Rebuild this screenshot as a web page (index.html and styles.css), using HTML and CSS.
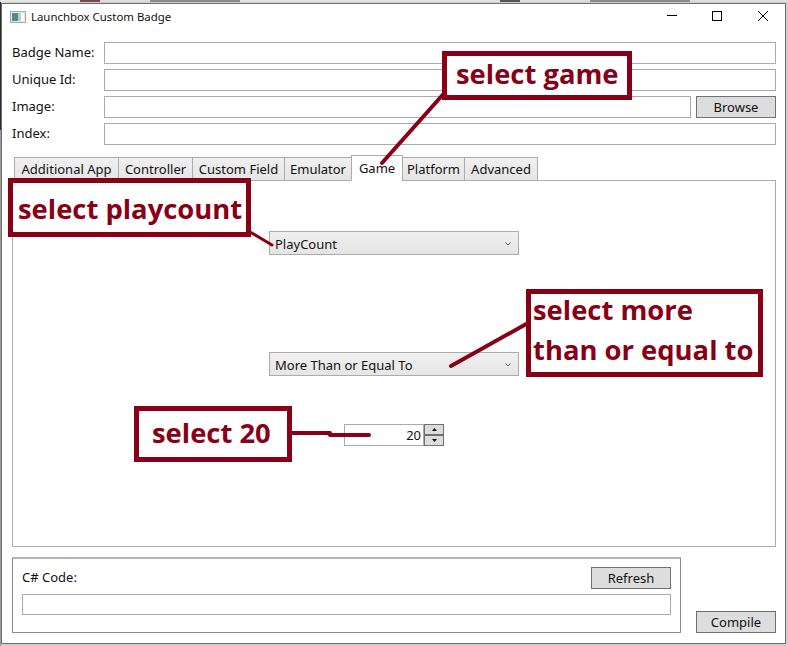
FILE: index.html
```html
<!DOCTYPE html>
<html lang="en">
<head>
    <meta charset="UTF-8">
    <meta name="viewport" content="width=device-width, initial-scale=1.0">
    <title>Launchbox Custom Badge</title>
    <link rel="stylesheet" href="styles.css">
</head>
<body>
    <div class="window">
        <div class="titlebar">
            <svg class="app-icon" width="16" height="12" viewBox="0 0 16 12">
                <rect x="0.5" y="0.5" width="15" height="11" fill="#e8e8e8" stroke="#a9a9a9"/>
                <rect x="2" y="2" width="6" height="8" fill="#4f8f8a"/>
                <rect x="8" y="2" width="3" height="8" fill="#b7cfc9"/>
                <rect x="11" y="2" width="3" height="8" fill="#fff"/>
            </svg>
            <span class="title">Launchbox Custom Badge</span>
            <div class="caption-buttons">
                <svg width="10" height="10" viewBox="0 0 10 10"><path d="M0 4.5H10" stroke="#000" fill="none"/></svg>
                <svg width="10" height="10" viewBox="0 0 10 10"><rect x="0.5" y="0.5" width="9" height="9" stroke="#000" fill="none"/></svg>
                <svg class="close" width="10" height="10" viewBox="0 0 10 10"><path d="M0 0L10 10M10 0L0 10" stroke="#000" fill="none"/></svg>
            </div>
        </div>

        <div class="form">
            <label class="form-label">Badge Name:</label>
            <div class="field"></div>
            <label class="form-label">Unique Id:</label>
            <div class="field"></div>
            <label class="form-label">Image:</label>
            <div class="field-row">
                <div class="field"></div>
                <button class="btn">Browse</button>
            </div>
            <label class="form-label">Index:</label>
            <div class="field"></div>
        </div>

        <div class="tabs">
            <div class="tab w-additional">Additional App</div>
            <div class="tab w-controller">Controller</div>
            <div class="tab w-custom">Custom Field</div>
            <div class="tab w-emulator">Emulator</div>
            <div class="tab tab-active">Game</div>
            <div class="tab w-platform">Platform</div>
            <div class="tab w-advanced">Advanced</div>
        </div>
        <div class="tab-panel">
            <div class="combo">
                <span>PlayCount</span>
                <svg width="6" height="4" viewBox="0 0 6 4"><path d="M0.5 0.5L3 3L5.5 0.5" stroke="#606060" fill="none"/></svg>
            </div>
            <div class="combo combo-second">
                <span>More Than or Equal To</span>
                <svg width="6" height="4" viewBox="0 0 6 4"><path d="M0.5 0.5L3 3L5.5 0.5" stroke="#606060" fill="none"/></svg>
            </div>
            <div class="numeric">
                <div class="numeric-value">20</div>
                <div class="spinner">
                    <div class="spin"><svg width="5" height="3" viewBox="0 0 5 3"><path d="M2.5 0L5 3H0Z" fill="#111"/></svg></div>
                    <div class="spin"><svg width="5" height="3" viewBox="0 0 5 3"><path d="M0 0H5L2.5 3Z" fill="#111"/></svg></div>
                </div>
            </div>
        </div>

        <div class="bottom">
            <div class="code-group">
                <div class="code-head">
                    <span>C# Code:</span>
                    <button class="btn">Refresh</button>
                </div>
                <div class="field code-field"></div>
            </div>
            <button class="btn">Compile</button>
        </div>
    </div>

    <!-- screenshot annotations -->
    <svg class="arrows" width="788" height="646" viewBox="0 0 788 646">
        <g stroke="#880015" fill="none" stroke-linecap="round">
            <path d="M447 90L382 163" stroke-width="4"/>
            <path d="M250 232L272 245" stroke-width="3"/>
            <path d="M528 323L451 366" stroke-width="4"/>
            <path d="M292 433H330" stroke-width="4"/>
            <path d="M330 435H369" stroke-width="4"/>
        </g>
    </svg>
    <div class="note note-game">select game</div>
    <div class="note note-playcount">select playcount</div>
    <div class="note note-more"><div class="note-lines">select more<br>than or equal to</div></div>
    <div class="note note-twenty">select 20</div>
</body>
</html>
```

FILE: styles.css
```css
/* Page behind the window */
html, body {
    margin: 0;
    padding: 0;
    height: 646px;
    overflow: hidden;
}
body {
    position: relative;
    /* bits of the desktop showing around the window */
    background:
        linear-gradient(90deg, #e6e6e6 0 80px, #7a4a50 80px 100px, #dcdcdc 100px 150px, #8a8a8a 150px 240px, #e0e0e0 240px 500px, #555 500px 520px, #dcdcdc 520px 590px, #8a8a8a 590px 690px, #dcdcdc 690px 788px) top / 100% 2px no-repeat,
        linear-gradient(#2a2a2a 0 130px, #9a9a9a 130px) left / 1px 100% no-repeat,
        #cfcfcf;
    font-family: "Noto Sans", "Open Sans", sans-serif;
    font-size: 13px;
    color: #111;
}

/* Main window */
.window {
    box-sizing: border-box;
    width: 785px;
    height: 641px;
    margin: 3px 0 0 1px;
    background-color: white;
    border: 1px solid #6e6e6e;
    display: flex;
    flex-direction: column;
}

/* Title bar */
.titlebar {
    height: 38px;
    flex: none;
    display: flex;
    align-items: flex-start;
    box-sizing: border-box;
    padding: 7px 0 0 8px;
}
.title {
    margin-left: 5px;
    font-size: 11.4px;
    line-height: 12px;
}
.caption-buttons {
    margin-left: auto;
    display: flex;
    gap: 35px;
    padding-right: 17px;
}
.caption-buttons .close {
    margin-left: 1px;
}

/* Top form */
.form {
    display: grid;
    grid-template-columns: 92px 1fr;
    grid-auto-rows: 22px;
    row-gap: 5px;
    padding: 0 9px 0 10px;
    flex: none;
}
.form-label {
    line-height: 21px;
}
.field {
    box-sizing: border-box;
    height: 22px;
    border: 1px solid #ababab;
    background-color: white;
}
.field-row {
    display: flex;
    gap: 5px;
}
.field-row .field {
    flex: 1;
}

/* Buttons */
.btn {
    box-sizing: border-box;
    width: 80px;
    height: 22px;
    flex: none;
    padding: 0;
    border: 1px solid #707070;
    background-color: #dddddd;
    font-family: inherit;
    font-size: 13px;
    color: #111;
}

/* Tabs */
.tabs {
    display: flex;
    align-items: flex-end;
    height: 26px;
    margin: 10px 0 -1px 12px;
    flex: none;
    position: relative;
    z-index: 1;
}
.tab {
    box-sizing: border-box;
    height: 24px;
    border: 1px solid #acacac;
    background: linear-gradient(#f0f0f0, #e5e5e5);
    text-align: center;
    line-height: 23px;
    margin-left: -1px;
}
.tab:first-child {
    margin-left: 0;
}
.w-additional { width: 105px; }
.w-controller { width: 75px; }
.w-custom { width: 93px; }
.w-emulator { width: 68px; }
.w-platform { width: 63px; }
.w-advanced { width: 74px; }
.tab-active {
    width: 52px;
    height: 26px;
    background: white;
    border-bottom-color: white;
    line-height: 24px;
}
.tab-panel {
    box-sizing: border-box;
    height: 367px;
    margin: 0 9px 0 10px;
    padding: 50px 0 0 256px;
    border: 1px solid #acacac;
    flex: none;
}

/* Combos */
.combo {
    box-sizing: border-box;
    width: 250px;
    height: 24px;
    padding: 1px 7px 0 5px;
    border: 1px solid #acacac;
    background: linear-gradient(#f0f0f0, #e5e5e5);
    display: flex;
    align-items: center;
    justify-content: space-between;
}
.combo-second {
    margin-top: 97px;
}

/* Number box */
.numeric {
    display: flex;
    width: 100px;
    height: 22px;
    margin: 48px 0 0 75px;
}
.numeric-value {
    box-sizing: border-box;
    width: 80px;
    border: 1px solid #ababab;
    text-align: right;
    padding-right: 2px;
    line-height: 21px;
}
.spinner {
    width: 20px;
    display: flex;
    flex-direction: column;
}
.spin {
    box-sizing: border-box;
    height: 11px;
    border: 1px solid #707070;
    background-color: #dddddd;
    display: flex;
    align-items: center;
    justify-content: center;
}

/* Bottom area */
.bottom {
    display: flex;
    align-items: flex-end;
    gap: 15px;
    margin: 10px 0 0 10px;
}
.code-group {
    box-sizing: border-box;
    width: 669px;
    height: 76px;
    padding: 8px 9px 0;
    border: 1px solid #8c8c8c;
    border-top: 2px solid #b4b4b4;
}
.code-head {
    display: flex;
    justify-content: space-between;
    align-items: flex-start;
    margin-bottom: 5px;
    line-height: 20px;
}
.code-field {
    height: 21px;
}

/* Annotations pasted over the screenshot */
.arrows {
    position: absolute;
    left: 0;
    top: 0;
    z-index: 2;
}
.note {
    position: absolute;
    z-index: 3;
    box-sizing: border-box;
    border: 5px solid #880015;
    background-color: white;
    color: #880015;
    font-family: "Open Sans", "Noto Sans", sans-serif;
    font-weight: 700;
    font-size: 27.4px;
    line-height: 40px;
    white-space: nowrap;
}
.note-game {
    left: 442px;
    top: 51px;
    width: 190px;
    height: 49px;
    padding-left: 9px;
    line-height: 36px;
}
.note-playcount {
    left: 8px;
    top: 178px;
    width: 243px;
    height: 59px;
    padding: 6px 0 0 5px;
}
.note-more {
    left: 526px;
    top: 289px;
    width: 237px;
    height: 88px;
    padding-left: 2px;
}
.note-lines {
    margin-top: -4px;
}
.note-twenty {
    left: 134px;
    top: 406px;
    width: 158px;
    height: 56px;
    padding: 2px 0 0 13px;
}
```
